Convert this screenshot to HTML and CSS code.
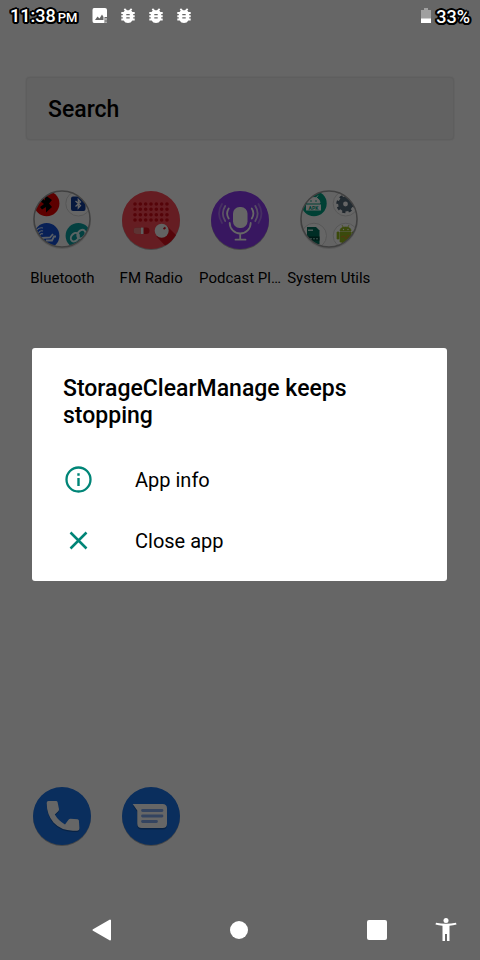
FILE: index.html
```html
<!DOCTYPE html>
<html lang="en">
<head>
<meta charset="utf-8">
<meta name="viewport" content="width=device-width, initial-scale=1">
<title>Home</title>
<link rel="stylesheet" href="styles.css">
</head>
<body>
<div class="screen">
  <header class="status">
    <div class="status-left">
      <time class="clock">11:38<small>PM</small></time>
      <svg class="status-icon" viewBox="0 0 16 16" aria-hidden="true"><path fill="#fff" d="M2 0H13Q15 0 15 2V9H12.500V15H2Q.5 15 .5 13V2Q.5 0 2 0Z"/><path fill="#666" d="M3 12L5.500 8.500L7.500 10.500L10 6.500L11.500 9V12Z"/><path fill="#aaa" d="M13 10H15V12.500H13ZM13 13.500H15V15H13Z"/></svg>
      <svg class="status-icon" viewBox="0 0 16 16" aria-hidden="true"><use href="#bug"/></svg>
      <svg class="status-icon" viewBox="0 0 16 16" aria-hidden="true"><use href="#bug"/></svg>
      <svg class="status-icon" viewBox="0 0 16 16" aria-hidden="true"><use href="#bug"/></svg>
    </div>
    <div class="status-right">
      <svg class="battery" viewBox="0 0 10 16" aria-hidden="true"><path fill="#a0a0a0" d="M3 0H7V2H10V11H0V2H3Z"/><path fill="#fff" d="M0 10.500H10V15H0Z"/></svg>
      <span class="charge">33%</span>
    </div>
  </header>

  <main class="home">
    <input class="search" type="search" placeholder="Search" aria-label="Search">
    <div class="apps">
      <button class="app">
        <svg class="app-icon" viewBox="0 0 60 60" aria-hidden="true">
          <defs><clipPath id="folder"><circle cx="30" cy="29" r="28"/></clipPath></defs>
          <circle cx="30" cy="30" r="29" fill="#000" opacity=".12"/>
          <circle cx="30" cy="29" r="28" fill="#fafafa"/>
          <g clip-path="url(#folder)">
            <circle cx="14.700" cy="13.500" r="12.700" fill="#e80000"/>
            <path d="M13 5L20 10L17 13.500L20 17L14 22.500V17L10 19.500L8 17L12 14L8 11L10 8L13 10.500Z" fill="#000"/>
            <circle cx="46.300" cy="13.500" r="12.500" fill="#fff" stroke="#d8d8d8"/>
            <rect x="39" y="6.500" width="14.500" height="14.500" rx="2" fill="#103d9c"/>
            <path d="M43.500 11L48.500 15.500L46.300 18V9.500L48.500 12L43.500 16.500" fill="none" stroke="#fff" stroke-width="1.300"/>
            <circle cx="14.700" cy="45.700" r="12.700" fill="#1550d8"/>
            <path d="M5 40Q7 37 11 38M6.500 43Q8 40 11 41M8 45Q9 43 11 44" fill="none" stroke="#dceaff" stroke-width="1.200"/>
            <path d="M10 48L18 47.500L21 44M14 50.500H20L22 46.500H24" fill="none" stroke="#dceaff" stroke-width="1.800"/>
            <circle cx="46.300" cy="45.700" r="12.700" fill="#08a0a0"/>
            <g fill="none" stroke="#dffafa" stroke-width="2" transform="rotate(-50 46.300 45.700)"><ellipse cx="43" cy="44" rx="4.700" ry="3.500"/><ellipse cx="49.500" cy="47" rx="4.700" ry="3.500"/></g>
          </g>
          <circle cx="30" cy="29" r="28" fill="none" stroke="#a0a0a0" stroke-width="1.500"/>
        </svg>
        <span class="app-name">Bluetooth</span>
      </button>
      <button class="app">
        <svg class="app-icon" viewBox="0 0 60 60" aria-hidden="true">
          <circle cx="30" cy="31" r="29" fill="#000" opacity=".3"/>
          <circle cx="30" cy="30" r="29" fill="#fc4955"/>
          <path d="M45.500 35.500L55 45Q50 53 44 55.500L35.500 46.500Z" fill="#d7101c"/>
          <path d="M14 14H46.500M14 19.300H46.500M14 24.700H46.500M14 30H46.500" fill="none" stroke="#d40b17" stroke-width="3.600" stroke-linecap="round" stroke-dasharray="0 5.330"/>
          <rect x="12.500" y="37.500" width="16" height="6.500" rx="3.250" fill="#d7101c"/>
          <path d="M20 37.500H15.700A3.250 3.250 0 0 0 15.700 44H20Z" fill="#e8807f"/>
          <path d="M20 37.500H22.500V44H20Z" fill="#eee"/>
          <circle cx="40.700" cy="40.700" r="7" fill="#f5f5f5"/>
          <path d="M42.500 39L44.500 37.500" stroke="#d7101c" stroke-width="1.800"/>
        </svg>
        <span class="app-name">FM Radio</span>
      </button>
      <button class="app">
        <svg class="app-icon" viewBox="0 0 60 60" aria-hidden="true">
          <circle cx="30" cy="31" r="29" fill="#000" opacity=".3"/>
          <circle cx="30" cy="30" r="29" fill="#8c3af0"/>
          <rect x="23" y="17" width="14.500" height="21" rx="6.500" fill="#fff"/>
          <g fill="none" stroke="#fff" stroke-width="1.800" stroke-linecap="round">
            <path d="M19.700 33A10.500 10.500 0 0 0 40.700 33M30.200 43.500V49.500M25.500 49.700H35.500"/>
            <path d="M18.700 18.500Q15.500 23.500 18.700 28.500M41.800 18.500Q45 23.500 41.800 28.500"/>
            <path d="M15.200 16Q10.500 23.500 15.200 31M45.300 16Q50 23.500 45.300 31" opacity=".7"/>
            <path d="M12 14Q6 23.500 12 33M48.500 14Q54.500 23.500 48.500 33" opacity=".3"/>
          </g>
        </svg>
        <span class="app-name">Podcast Pl…</span>
      </button>
      <button class="app">
        <svg class="app-icon" viewBox="0 0 60 60" aria-hidden="true">
          <circle cx="30" cy="30" r="29" fill="#000" opacity=".12"/>
          <circle cx="30" cy="29" r="28" fill="#fafafa"/>
          <g clip-path="url(#folder)">
            <circle cx="15" cy="13.500" r="12.700" fill="#00a083"/>
            <path d="M8 13Q8.500 7.500 14.500 7.500Q20.500 7.500 21 13ZM10 5.500L12 8M19 5.500L17 8" fill="#fff" stroke="#fff"/>
            <circle cx="12" cy="11" r=".8" fill="#00a083"/><circle cx="17" cy="11" r=".8" fill="#00a083"/>
            <rect x="7" y="14.500" width="15" height="6" fill="#fff"/>
            <text class="apk" x="14.500" y="19.500">APK</text>
            <circle cx="46.700" cy="13.500" r="12.500" fill="#fff" stroke="#d8d8d8"/>
            <circle cx="46.500" cy="14" r="7.500" fill="none" stroke="#4f6272" stroke-width="3.500" stroke-dasharray="3 2.890"/>
            <circle cx="46.500" cy="14" r="4.900" fill="none" stroke="#566b7c" stroke-width="5"/>
            <circle cx="15" cy="45.700" r="12.500" fill="#fff" stroke="#d8d8d8"/>
            <path d="M8 37H17L20.500 40.500V54H8Z" fill="#00705d"/>
            <path d="M9 39.500H14V41H9Z" fill="#bfe8df"/><rect x="8" y="46.500" width="12.500" height="4" fill="#003f35"/><path d="M11 48.800H19.500" stroke="#9ed6ca" stroke-dasharray="2 1"/>
            <circle cx="46.700" cy="45.700" r="12.500" fill="#fff" stroke="#d8d8d8"/>
            <path d="M41 41Q41 37 46.500 37Q52 37 52 41ZM41 42H52V52H49V56H47.500V52H45.500V56H43V52H41ZM38 42H40V49H38ZM53 42H55V49H53ZM43 35L44.500 38M50 35L48.500 38" fill="#95b91e" stroke="#95b91e" stroke-width=".7"/>
            <circle cx="44.500" cy="39.500" r=".7" fill="#fff"/><circle cx="49" cy="39.500" r=".7" fill="#fff"/>
            <path d="M42 47L45 46L47 49L49 45L51 47" fill="none" stroke="#d48a26"/>
          </g>
          <circle cx="30" cy="29" r="28" fill="none" stroke="#a0a0a0" stroke-width="1.500"/>
        </svg>
        <span class="app-name">System Utils</span>
      </button>
    </div>
    <div class="apps dock">
      <button class="app" aria-label="Phone">
        <svg class="app-icon" viewBox="0 0 60 60" aria-hidden="true">
          <circle cx="30" cy="31" r="29" fill="#000" opacity=".3"/>
          <circle cx="30" cy="30" r="29" fill="#1a73e8"/>
          <path d="M16.500 15H24Q25.300 15 25.600 16.300L27 23Q27.200 24.200 26.200 25.200L22.800 28.600Q26.500 35 33 38.500L36.500 33.800Q37.300 32.700 38.500 32.700L45.500 33.200Q46.700 33.400 46.900 34.600L47.400 42Q47.400 44.700 45 44.700H41Q29 44.500 21.500 36.500Q14.700 28.500 14.700 17Q14.700 15 16.500 15Z" fill="#000" opacity=".25" transform="translate(0 1.200)"/>
          <path d="M16.500 15H24Q25.300 15 25.600 16.300L27 23Q27.200 24.200 26.200 25.200L22.800 28.600Q26.500 35 33 38.500L36.500 33.800Q37.300 32.700 38.500 32.700L45.500 33.200Q46.700 33.400 46.900 34.600L47.400 42Q47.400 44.700 45 44.700H41Q29 44.500 21.500 36.500Q14.700 28.500 14.700 17Q14.700 15 16.500 15Z" fill="#fff"/>
        </svg>
      </button>
      <button class="app" aria-label="Messages">
        <svg class="app-icon" viewBox="0 0 60 60" aria-hidden="true">
          <circle cx="30" cy="31" r="29" fill="#000" opacity=".3"/>
          <circle cx="30" cy="30" r="29" fill="#1a73e8"/>
          <path d="M11.700 18H41.500Q46 18 46 22.500V37.500Q46 42 41.500 42H20.800Q16.300 42 16.300 37.500V24.500Z" fill="#000" opacity=".25" transform="translate(0 1.500)"/>
          <path d="M11.700 18H41.500Q46 18 46 22.500V37.500Q46 42 41.500 42H20.800Q16.300 42 16.300 37.500V24.500Z" fill="#fff"/>
          <path d="M21.500 24.500H41M21.500 30H41M21.500 35.500H35.500" stroke="#82aaf0" stroke-width="2.800" stroke-linecap="round"/>
        </svg>
      </button>
    </div>
  </main>

  <nav class="nav">
    <button class="nav-back" aria-label="Back"><svg class="nav-icon" viewBox="0 0 24 24" aria-hidden="true"><path d="M20 2.500V21.500L3.500 12Z" fill="#fff" stroke="#fff" stroke-width="2" stroke-linejoin="round"/></svg></button>
    <button class="nav-home" aria-label="Home"><svg class="nav-icon" viewBox="0 0 24 24" aria-hidden="true"><circle cx="12" cy="12" r="9" fill="#fff"/></svg></button>
    <button class="nav-recent" aria-label="Recent apps"><svg class="nav-icon" viewBox="0 0 24 24" aria-hidden="true"><rect x="2" y="2" width="20" height="20" rx="2" fill="#fff"/></svg></button>
    <button class="nav-access" aria-label="Accessibility"><svg class="nav-icon" viewBox="0 0 24 24" aria-hidden="true"><circle cx="12" cy="2.500" r="2.500" fill="#fff"/><path d="M2 4.700Q12 7 22 4.700L22.500 6.600Q19 7.500 15.500 7.800V23H13V16H11V23H8.500V7.800Q5 7.500 1.500 6.600Z" fill="#fff"/></svg></button>
  </nav>

  <div class="scrim">
    <section class="dialog" role="dialog" aria-labelledby="dialog-title">
      <h1 class="dialog-title" id="dialog-title">StorageClearManage keeps stopping</h1>
      <button class="action">
        <svg class="action-icon" viewBox="0 0 30 30" aria-hidden="true"><circle cx="15.500" cy="14.500" r="12" fill="none" stroke="#008577" stroke-width="2.300"/><path d="M14.300 8.200H16.700V10.700H14.300ZM14.300 13H16.700V21H14.300Z" fill="#008577"/></svg>
        <span>App info</span>
      </button>
      <button class="action">
        <svg class="action-icon" viewBox="0 0 30 30" aria-hidden="true"><path d="M7.500 6.500L23.500 22.500M23.500 6.500L7.500 22.500" stroke="#008577" stroke-width="2.500"/></svg>
        <span>Close app</span>
      </button>
    </section>
  </div>
</div>
<svg width="0" height="0" class="symbols" aria-hidden="true">
  <symbol id="bug" viewBox="0 0 16 16"><path fill="#fff" fill-rule="evenodd" d="M3.700 1.500L5 .3L7 2.200H9L11 .3L12.300 1.500L11.200 2.700Q12 3.300 12.400 4H14.700V6H13.200V7.200H14.700V9.200H13.200V10.400H14.700V12.400H12.400Q11 15 8 15Q5 15 3.600 12.400H1.300V10.400H2.800V9.200H1.300V7.200H2.800V6H1.300V4H3.600Q4 3.300 4.800 2.700ZM6.300 6V7.300H9.700V6ZM6.300 9.300V10.600H9.700V9.300Z"/></symbol>
</svg>
</body>
</html>
```
FILE: styles.css
```css
* {
  box-sizing: border-box;
}

body {
  margin: 0;
  background: #fff;
  color: #000;
  font-family: Roboto, "Noto Sans", sans-serif;
}

button {
  margin: 0;
  padding: 0;
  border: 0;
  background: none;
  color: inherit;
  font: inherit;
}

svg {
  display: block;
}

.symbols {
  position: absolute;
}

.screen {
  position: relative;
  display: flex;
  flex-direction: column;
  min-height: 100vh;
}

.status {
  position: relative;
  z-index: 2;
  display: flex;
  justify-content: space-between;
  height: 32px;
  padding: 0 10px;
  color: #fff;
  font-size: 18px;
  font-weight: 500;
  line-height: 32px;
  text-shadow: 2px 0 #000, -2px 0 #000, 0 2px #000, 0 -2px #000,
    1px 1px #000, -1px 1px #000, 1px -1px #000, -1px -1px #000,
    2px 1px #000, -2px 1px #000, 2px -1px #000, -2px -1px #000,
    1px 2px #000, -1px 2px #000;
}

.status-left,
.status-right {
  display: flex;
  align-items: center;
}

.status-left {
  gap: 12px;
}

.status-right {
  gap: 5px;
}

.clock,
.charge {
  padding-top: 2px;
}

.clock {
  margin-right: 3px;
}

.clock small {
  margin-left: 2px;
  font-size: 13px;
}

.status-icon {
  width: 16px;
  height: 16px;
}

.battery {
  width: 10px;
  height: 16px;
}

.home {
  display: flex;
  flex: 1;
  flex-direction: column;
  padding: 45px 18px 0;
}

.search {
  height: 63px;
  margin: 0 8px;
  padding: 2px 21px 0;
  border: 1px solid #ececec;
  border-radius: 4px;
  background: #f4f4f4;
  box-shadow: 0 0 2px #ddd;
  color: #000;
  font: 500 23px Roboto, sans-serif;
}

.search::placeholder {
  color: #000;
  opacity: 1;
}

.apps {
  display: grid;
  grid-template-columns: repeat(5, 1fr);
  margin-top: 50px;
}

.app {
  display: flex;
  flex-direction: column;
  align-items: center;
  gap: 18px;
}

.app-icon {
  width: 60px;
  height: 60px;
}

.app-name {
  font-size: 15px;
  line-height: 20px;
  white-space: nowrap;
}

.apk {
  fill: #00a083;
  font-size: 5px;
  font-weight: 700;
  text-anchor: middle;
}

.dock {
  margin-top: auto;
  margin-bottom: 54px;
}

.nav {
  position: relative;
  z-index: 2;
  display: grid;
  grid-template-columns: 68fr repeat(6, 69fr);
  align-items: center;
  justify-items: center;
  height: 60px;
}

.nav-icon {
  width: 24px;
  height: 24px;
}

.nav-back {
  grid-column: 2;
}

.nav-home {
  grid-column: 4;
}

.nav-recent {
  grid-column: 6;
}

.nav-access {
  grid-column: 7;
}

.scrim {
  position: absolute;
  z-index: 1;
  inset: 0;
  display: flex;
  align-items: center;
  padding: 0 33px 31px 32px;
  background: rgba(0, 0, 0, 0.6);
}

.dialog {
  width: 100%;
  padding: 27px 0 10px;
  border-radius: 3px;
  background: #fff;
}

.dialog-title {
  margin: 0 31px 20px;
  font-size: 23px;
  font-weight: 500;
  line-height: 27px;
}

.action {
  display: flex;
  align-items: center;
  gap: 42px;
  width: 100%;
  height: 61px;
  padding: 0 31px;
  font-size: 20px;
  text-align: left;
}

.action-icon {
  width: 30px;
  height: 30px;
}
```
